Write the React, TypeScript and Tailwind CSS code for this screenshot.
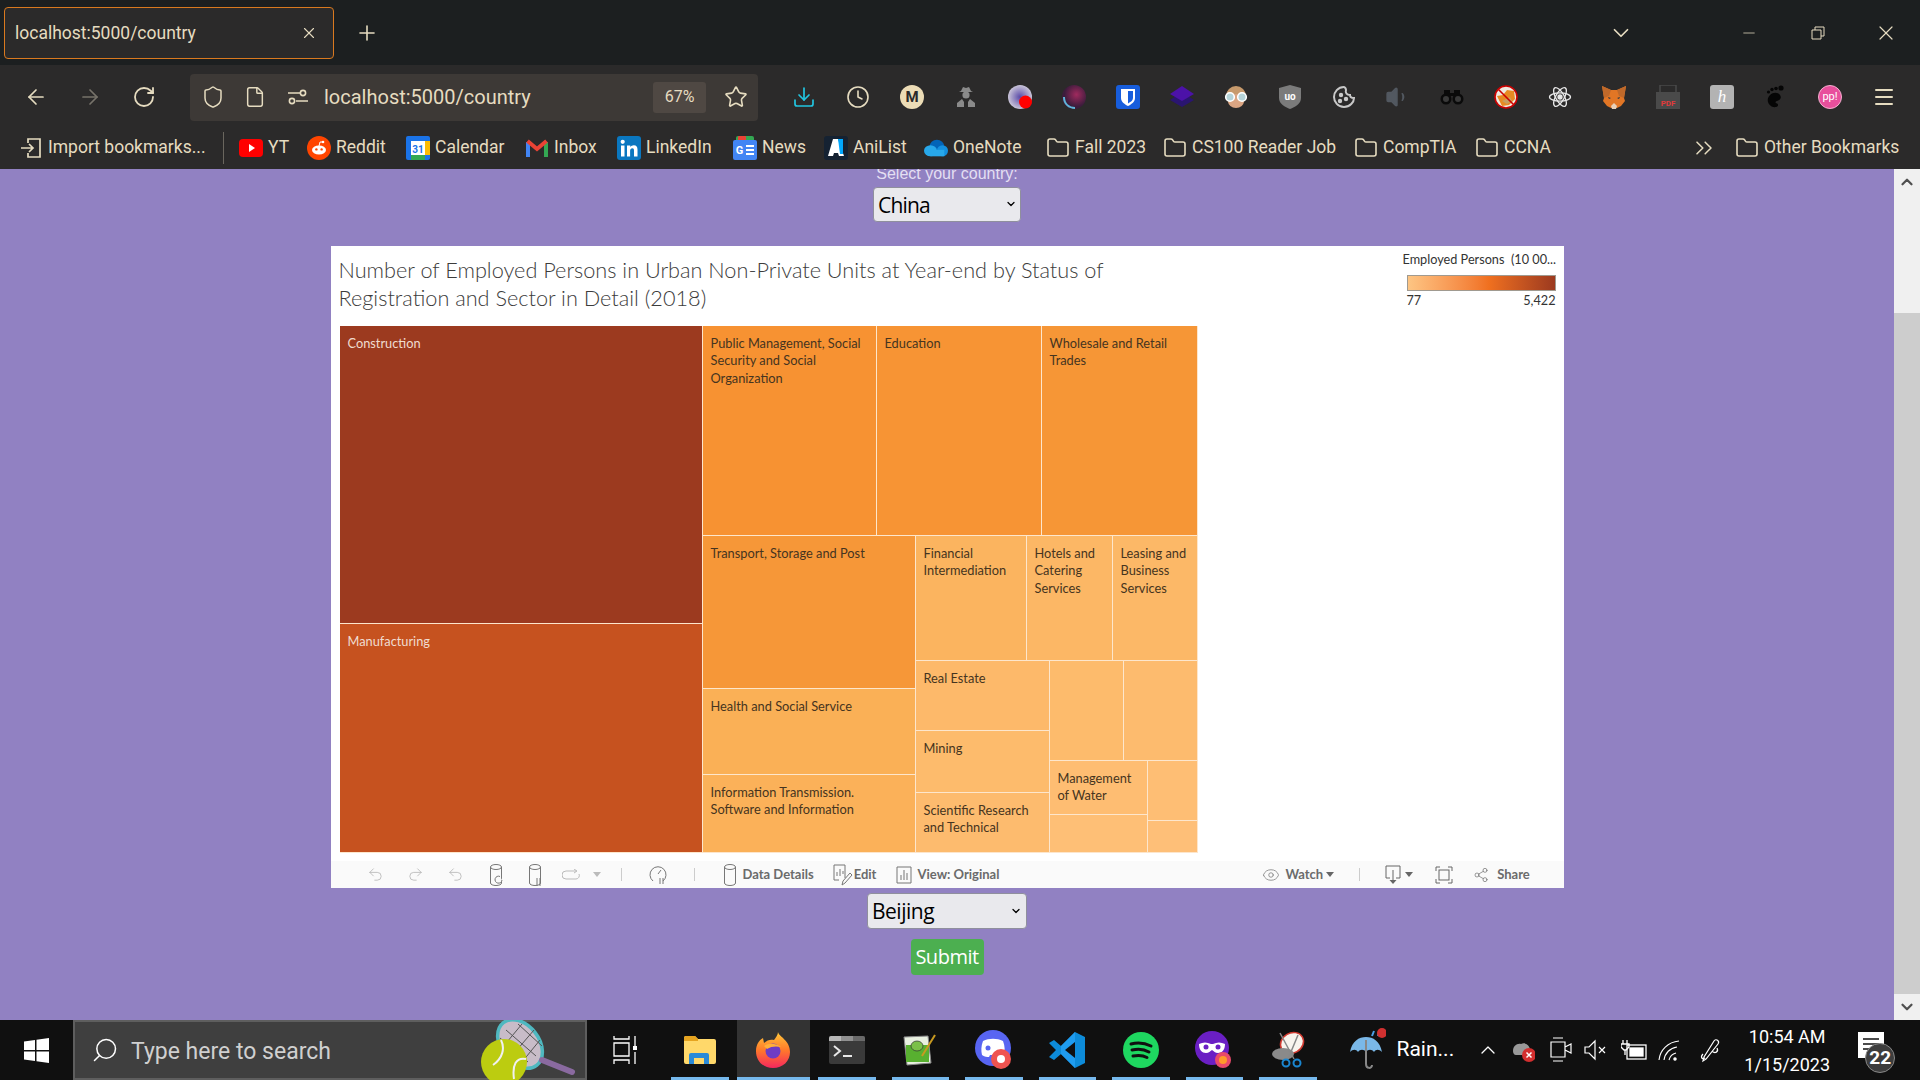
import React from 'react';
import {
  ArrowLeft,
  ArrowRight,
  RotateCw,
  Shield,
  File,
  Star,
  X,
  Plus,
  ChevronDown,
  ChevronUp,
  Minus,
  Folder,
  ChevronsRight,
  Menu,
  Clock,
  Download,
  Search,
  Eye,
  Share2,
  Undo2,
  Redo2,
  Volume1,
} from 'lucide-react';

const cream = 'text-[#e6dcc0]';

const SlidersIcon = () => (
  <svg width="22" height="22" viewBox="0 0 22 22" fill="none" stroke="#e6dcc0" strokeWidth="1.6">
    <circle cx="5" cy="15" r="2.6" />
    <circle cx="16" cy="7" r="2.6" />
    <path d="M1 7h12M9 15h12" />
  </svg>
);

const ImportIcon = () => (
  <svg width="22" height="22" viewBox="0 0 22 22" fill="none" stroke="#e6dcc0" strokeWidth="1.7">
    <path d="M8 6V2h12v18H8v-4M1 11h12M9 7l4 4-4 4" />
  </svg>
);

const YtIcon = () => (
  <svg width="24" height="18" viewBox="0 0 24 18">
    <rect width="24" height="18" rx="4" fill="#f00" />
    <path d="M10 5l6 4-6 4z" fill="#fff" />
  </svg>
);

const RedditIcon = () => (
  <svg width="24" height="24" viewBox="0 0 24 24">
    <circle cx="12" cy="12" r="12" fill="#ff4500" />
    <ellipse cx="12" cy="14" rx="7" ry="4.6" fill="#fff" />
    <circle cx="9.4" cy="13.4" r="1.2" fill="#ff4500" />
    <circle cx="14.6" cy="13.4" r="1.2" fill="#ff4500" />
    <circle cx="16" cy="6" r="1.3" fill="#fff" />
    <path d="M12 10l1-4 3 0" stroke="#fff" fill="none" />
  </svg>
);

const CalendarIcon = () => (
  <svg width="24" height="24" viewBox="0 0 24 24">
    <rect width="24" height="24" rx="2" fill="#1a73e8" />
    <rect x="5" y="5" width="14" height="14" fill="#fff" />
    <rect x="19" y="5" width="5" height="14" fill="#fbbc04" />
    <rect x="5" y="19" width="14" height="5" fill="#34a853" />
    <text x="12" y="16.5" textAnchor="middle" fontSize="10" fontWeight="700" fill="#1a73e8" fontFamily="Roboto, sans-serif">31</text>
  </svg>
);

const GmailIcon = () => (
  <svg width="22" height="18" viewBox="0 0 22 18" fill="none">
    <path d="M2 18V3" stroke="#4285f4" strokeWidth="4" />
    <path d="M20 18V3" stroke="#34a853" strokeWidth="4" />
    <path d="M1.5 2l9.5 8 9.5-8" stroke="#ea4335" strokeWidth="4" />
  </svg>
);

const LinkedInIcon = () => (
  <svg width="24" height="24" viewBox="0 0 24 24">
    <rect width="24" height="24" rx="3" fill="#0a77c0" />
    <rect x="4" y="9.5" width="3.5" height="11" fill="#fff" />
    <circle cx="5.7" cy="5.8" r="2.1" fill="#fff" />
    <path d="M10 9.5h3.3V11c.8-1.1 2-1.8 3.5-1.8 2.7 0 3.7 1.7 3.7 4.5v6.800h-3.500v-6c0-1.400-.5-2.200-1.700-2.200s-2.200 1-2.200 2.400v5.800H10z" fill="#fff" />
  </svg>
);

const NewsIcon = () => (
  <svg width="24" height="24" viewBox="0 0 24 24">
    <rect x="3" y="0" width="18" height="8" rx="2" fill="#34a853" />
    <rect x="5" y="0" width="8" height="6" rx="1" fill="#ea4335" />
    <rect y="4" width="24" height="20" rx="2" fill="#4285f4" />
    <text x="6.500" y="18" textAnchor="middle" fontSize="11" fontWeight="700" fill="#fff" fontFamily="Roboto, sans-serif">G</text>
    <path d="M13 10h8M13 14h8M13 18h8" stroke="#fff" strokeWidth="2" />
  </svg>
);

const AniListIcon = () => (
  <svg width="24" height="24" viewBox="0 0 24 24">
    <rect width="24" height="24" rx="3" fill="#152232" />
    <path d="M9 3h5l6 17h-5l-1-3h-4l-1 3H4z" fill="#fff" />
    <path d="M14 3h5v15h-3z" fill="#02a9ff" />
  </svg>
);

const OneNoteIcon = () => (
  <svg width="26" height="18" viewBox="0 0 26 18">
    <ellipse cx="14" cy="7.500" rx="8" ry="7.500" fill="#0364b8" />
    <ellipse cx="20" cy="12" rx="6" ry="6" fill="#1490df" />
    <ellipse cx="7" cy="12" rx="7" ry="6" fill="#28a8ea" />
    <rect x="7" y="11" width="15" height="7" fill="#28a8ea" />
  </svg>
);

const Bookmark = ({ w, icon, label }: { w: string; icon: React.ReactNode; label: string }) => (
  <div className={`${w} flex items-center gap-[5px] shrink-0`}>
    <div className="w-6 flex justify-center shrink-0">{icon}</div>
    <span className="whitespace-nowrap text-[17.500px]">{label}</span>
  </div>
);

const FolderIcon = () => <Folder size={24} strokeWidth={1.6} className={cream} />;

const MIcon = () => (
  <div className="w-6 h-6 rounded-full bg-[#ecdcb6] flex items-center justify-center text-[15px] font-bold text-[#2a2a2a]">M</div>
);

const SpyIcon = () => (
  <svg width="20" height="24" viewBox="0 0 20 24" fill="#8a8a8a">
    <path d="M5 6l2-4 3 1 3-1 2 4 2 1H3z" />
    <circle cx="10" cy="10" r="3.600" />
    <path d="M1 22v-4l5-4 2 3v5zM19 22v-4l-5-4-2 3v5z" />
  </svg>
);

const Ext1 = () => (
  <svg width="24" height="24" viewBox="0 0 24 24">
    <defs>
      <radialGradient id="ext1">
        <stop offset="0" stopColor="#5a4aa8" />
        <stop offset="1" stopColor="#c9c4d8" />
      </radialGradient>
    </defs>
    <circle cx="12" cy="12" r="12" fill="url(#ext1)" />
    <circle cx="17.500" cy="17" r="6.500" fill="#f00" />
  </svg>
);

const Ext2 = () => (
  <svg width="24" height="24" viewBox="0 0 24 24">
    <defs>
      <radialGradient id="ext2" cx="0.600" cy="0.400">
        <stop offset="0" stopColor="#a02a5e" />
        <stop offset="1" stopColor="#3c1c3c" />
      </radialGradient>
    </defs>
    <circle cx="12" cy="12" r="12" fill="url(#ext2)" />
    <path d="M2 12c0 7 5 11 11 11" stroke="#5fb4d8" strokeWidth="2" fill="none" />
  </svg>
);

const BitwardenIcon = () => (
  <svg width="24" height="24" viewBox="0 0 24 24">
    <rect width="24" height="24" rx="3" fill="#175ddc" />
    <path d="M5 4h14v9c0 4-4 6.500-7 8-3-1.500-7-4-7-8z" fill="#fff" />
    <path d="M12 6h5v7c0 2.500-2.500 4-5 5.500z" fill="#175ddc" />
  </svg>
);

const DiamondIcon = () => (
  <svg width="24" height="24" viewBox="0 0 24 24">
    <path d="M12 7L24 15 12 22 0 15z" fill="#2a1570" />
    <path d="M12 1L24 9 12 16 0 9z" fill="#4c12a8" />
  </svg>
);

const FaceIcon = () => (
  <svg width="24" height="24" viewBox="0 0 24 24">
    <circle cx="12" cy="11" r="10" fill="#c79a6c" />
    <ellipse cx="12" cy="16" rx="8" ry="7" fill="#dba583" />
    <circle cx="6" cy="12" r="4.300" fill="#b5d3d8" stroke="#fff" strokeWidth="1.600" />
    <circle cx="18" cy="12" r="4.300" fill="#b5d3d8" stroke="#fff" strokeWidth="1.600" />
  </svg>
);

const UblockIcon = () => (
  <svg width="22" height="24" viewBox="0 0 22 24">
    <path d="M11 0l11 3v10c0 6-6 9-11 11C6 22 0 19 0 13V3z" fill="#7b7b7b" />
    <text x="11" y="15" textAnchor="middle" fontSize="10" fontWeight="700" fill="#fff" fontFamily="Roboto, sans-serif">uo</text>
  </svg>
);

const CookieIcon = () => (
  <svg width="24" height="24" viewBox="0 0 24 24" fill="none" stroke="#c8c8c8" strokeWidth="2">
    <path d="M12 2c-6 0-10 5-10 10s4 10 10 10 10-5 10-9c-3 0-4-1-4-3-3 0-5-2-4-5 0-1-1-3-2-3z" />
    <circle cx="9" cy="10" r="1.200" fill="#c8c8c8" />
    <circle cx="14" cy="14" r="1.200" fill="#c8c8c8" />
    <circle cx="8" cy="16" r="1.200" fill="#c8c8c8" />
  </svg>
);

const BinocularsIcon = () => (
  <svg width="24" height="16" viewBox="0 0 24 16">
    <circle cx="6" cy="10" r="5.500" fill="#0a0a0a" />
    <circle cx="18" cy="10" r="5.500" fill="#0a0a0a" />
    <circle cx="6" cy="10" r="3" fill="#3a3a3a" />
    <circle cx="18" cy="10" r="3" fill="#3a3a3a" />
    <rect x="4" y="1" width="6" height="6" fill="#0a0a0a" />
    <rect x="14" y="1" width="6" height="6" fill="#0a0a0a" />
    <rect x="10" y="4" width="4" height="3" fill="#0a0a0a" />
  </svg>
);

const NoFoxIcon = () => (
  <svg width="24" height="24" viewBox="0 0 24 24">
    <circle cx="12" cy="12" r="11" fill="#efe9e0" />
    <path d="M3 11l6-1 4-5 7 1 1 8-6 6-7 1z" fill="#e88a22" />
    <path d="M8 16l8-4 2 4-5 3z" fill="#c8a060" />
    <circle cx="12" cy="12" r="11" fill="none" stroke="#c00" strokeWidth="1.600" />
    <path d="M4.500 4.500l15 15" stroke="#c00" strokeWidth="1.600" />
  </svg>
);

const AtomIcon = () => (
  <svg width="24" height="24" viewBox="-12 -12 24 24" fill="none" stroke="#e8e8e8" strokeWidth="1.300">
    <ellipse rx="10.500" ry="4.200" />
    <ellipse rx="10.500" ry="4.200" transform="rotate(60)" />
    <ellipse rx="10.500" ry="4.200" transform="rotate(120)" />
    <circle r="2" fill="#e8e8e8" />
  </svg>
);

const FoxIcon = () => (
  <svg width="24" height="24" viewBox="0 0 24 24">
    <path d="M0 1l9 4h6l9-4-2 12 1 3-4 5-4 2H9l-4-2-4-5 1-3z" fill="#e27625" />
    <path d="M0 1l9 4-2 6-5 2zM24 1l-9 4 2 6 5 2z" fill="#c0692a" />
    <path d="M9 21l3-3 3 3-1 3h-4z" fill="#e8d0b8" />
    <path d="M6 12l3 1-2 1zM18 12l-3 1 2 1z" fill="#233447" />
  </svg>
);

const PdfIcon = () => (
  <svg width="24" height="24" viewBox="0 0 24 24">
    <rect x="4" y="0" width="16" height="9" fill="none" stroke="#4a4a4a" strokeWidth="1.500" />
    <rect y="7" width="24" height="17" fill="#4a4a4a" />
    <text x="12" y="21" textAnchor="middle" fontSize="8" fontWeight="700" fill="#e23a3a" fontFamily="Roboto, sans-serif">PDF</text>
  </svg>
);

const FootIcon = () => (
  <svg width="20" height="24" viewBox="0 0 20 24" fill="#050505">
    <path d="M4 10c3-3 8-3 10 0 2 3 0 5-3 6-2 .6-2 2 0 2.500 1.500.4 1.500 3-1 3.500-4 .8-7-2-8-5-.7-2.500 0-5 2-7z" />
    <circle cx="2.500" cy="7" r="1.600" />
    <circle cx="6" cy="4.500" r="1.700" />
    <circle cx="10" cy="3.500" r="1.800" />
    <circle cx="15" cy="3" r="2.600" />
  </svg>
);

const extensions: React.ReactNode[] = [
  <Download key="dl" size={24} strokeWidth={1.7} className="text-[#22c5e0]" />,
  <Clock key="clock" size={24} strokeWidth={1.6} className={cream} />,
  <MIcon key="m" />,
  <SpyIcon key="spy" />,
  <Ext1 key="e1" />,
  <Ext2 key="e2" />,
  <BitwardenIcon key="bw" />,
  <DiamondIcon key="dia" />,
  <FaceIcon key="face" />,
  <UblockIcon key="ub" />,
  <CookieIcon key="cookie" />,
  <Volume1 key="vol" size={26} fill="#525860" strokeWidth={1.500} className="text-[#525860]" />,
  <BinocularsIcon key="bin" />,
  <NoFoxIcon key="nofox" />,
  <AtomIcon key="atom" />,
  <FoxIcon key="fox" />,
  <PdfIcon key="pdf" />,
  <div key="h" className="w-6 h-6 rounded-[3px] bg-[#b3b3b3] flex items-center justify-center text-[17px] italic text-white font-['Liberation_Serif',serif]">h</div>,
  <FootIcon key="foot" />,
  <div key="pp" className="w-6 h-6 rounded-full bg-[#e84f9c] border border-[#f5b0d0] flex items-center justify-center text-[11px] text-white">pp!</div>,
  <Menu key="menu" size={24} strokeWidth={2} className={cream} />,
];

const Cell = ({ className, label, light }: { className: string; label?: string; light?: boolean }) => (
  <div className={`${className} shrink-0 border-r-[1.500px] border-b-[1.500px] border-[#fde6cc] pl-[8px] pr-[2px] pt-[8.500px] text-[12.800px] leading-[17.500px] whitespace-pre-line ${light ? 'text-[#f0dcd0]' : 'text-[#453420]'}`}>
    {label}
  </div>
);

const Treemap = () => (
  <div className="ml-[9px] flex w-[858px] h-[527px] font-['Lato',sans-serif]">
    <div className="w-[363px] flex flex-col">
      <Cell className="h-[298px] bg-[#9c3a1f]" label="Construction" light />
      <Cell className="h-[229px] bg-[#c6521f]" label="Manufacturing" light />
    </div>
    <div className="w-[495px] flex flex-col">
      <div className="flex h-[210px]">
        <Cell className="w-[174px] bg-[#f79232]" label={'Public Management, Social\nSecurity and Social\nOrganization'} />
        <Cell className="w-[165px] bg-[#f79434]" label="Education" />
        <Cell className="w-[156px] bg-[#f69636]" label={'Wholesale and Retail\nTrades'} />
      </div>
      <div className="flex h-[317px]">
        <div className="w-[213px] flex flex-col">
          <Cell className="h-[153px] bg-[#f69738]" label="Transport, Storage and Post" />
          <Cell className="h-[86px] bg-[#fab056]" label="Health and Social Service" />
          <Cell className="h-[78px] bg-[#fbb159]" label={'Information Transmission.\nSoftware and Information'} />
        </div>
        <div className="w-[282px] flex flex-col">
          <div className="flex h-[125px]">
            <Cell className="w-[111px] bg-[#fbb45f]" label={'Financial\nIntermediation'} />
            <Cell className="w-[86px] bg-[#fcb765]" label={'Hotels and\nCatering\nServices'} />
            <Cell className="w-[85px] bg-[#fcb867]" label={'Leasing and\nBusiness\nServices'} />
          </div>
          <div className="flex h-[192px]">
            <div className="w-[134px] flex flex-col">
              <Cell className="h-[70px] bg-[#fdb96a]" label="Real Estate" />
              <Cell className="h-[62px] bg-[#fdbb6c]" label="Mining" />
              <Cell className="h-[60px] bg-[#fdbb6e]" label={'Scientific Research\nand Technical'} />
            </div>
            <div className="w-[148px] flex flex-col">
              <div className="flex h-[100px]">
                <Cell className="w-[74px] bg-[#fdbb6c]" />
                <Cell className="w-[74px] bg-[#fdbb6e]" />
              </div>
              <div className="flex h-[92px]">
                <div className="w-[98px] flex flex-col">
                  <Cell className="h-[54px] bg-[#febd72]" label={'Management\nof Water'} />
                  <Cell className="h-[38px] bg-[#febf76]" />
                </div>
                <div className="w-[50px] flex flex-col">
                  <Cell className="h-[60px] bg-[#febe74]" />
                  <Cell className="h-[32px] bg-[#febf78]" />
                </div>
              </div>
            </div>
          </div>
        </div>
      </div>
    </div>
  </div>
);

const Cylinder = ({ children }: { children?: React.ReactNode }) => (
  <svg width="14" height="24" viewBox="0 0 14 24" fill="none" stroke="#777" strokeWidth="1">
    <ellipse cx="7" cy="4" rx="5.500" ry="2.500" />
    <path d="M1.500 4v16c0 1.500 2.500 2.500 5.500 2.500s5.500-1 5.500-2.500V4" />
    {children}
  </svg>
);

const VizToolbar = () => (
  <div className="h-[27px] bg-[#fafafa] flex items-center text-[13px] font-bold text-[#6b6b6b] font-['Lato',sans-serif]">
    <Undo2 size={17} strokeWidth={1} className="ml-[36px] text-[#aaa]" />
    <Redo2 size={17} strokeWidth={1} className="ml-[23px] text-[#aaa]" />
    <Undo2 size={17} strokeWidth={1} className="ml-[23px] text-[#aaa]" />
    <div className="ml-[25px]">
      <Cylinder>
        <path d="M13 17a3.500 3.500 0 11-2-3.500" fill="#fafafa" />
      </Cylinder>
    </div>
    <div className="ml-[25px]">
      <Cylinder>
        <path d="M9 15v8M12 15v8" stroke="#777" />
      </Cylinder>
    </div>
    <svg width="20" height="12" viewBox="0 0 20 12" fill="none" stroke="#bbb" className="ml-[20px]">
      <path d="M14 2H4a3.500 3.500 0 000 8h10a3.500 3.500 0 003-5M12 0l3 2-3 2" />
    </svg>
    <span className="ml-[11px] w-0 h-0 border-x-[4px] border-x-transparent border-t-[5px] border-t-[#bbb]" />
    <span className="ml-[20px] w-px h-[13px] bg-[#ccc]" />
    <svg width="18" height="20" viewBox="0 0 18 20" fill="none" stroke="#777" className="ml-[27px]">
      <path d="M4 16a8 8 0 1110 0M9 9l3-4M11 13v6M14 13v6" />
    </svg>
    <span className="ml-[27px] w-px h-[13px] bg-[#ccc]" />
    <div className="ml-[28px] flex items-center"><Cylinder /></div>
    <span className="ml-[6px]">Data Details</span>
    <svg width="20" height="22" viewBox="0 0 20 22" fill="none" stroke="#777" className="ml-[19px]">
      <path d="M12 14V1H1v15h5M4 12V8M7 12V5M10 10V7M9 21l1-4 7-8 2 2-7 8z" />
    </svg>
    <span className="ml-[1px]">Edit</span>
    <svg width="16" height="18" viewBox="0 0 16 18" fill="none" stroke="#777" className="ml-[20px]">
      <path d="M1 1h14v16H1zM5 14V9M8 14V4M11 14V7" />
    </svg>
    <span className="ml-[5px]">View: Original</span>
    <Eye size={18} strokeWidth={1} className="ml-[263px] text-[#777]" />
    <span className="ml-[5px]">Watch</span>
    <span className="ml-[3px] w-0 h-0 border-x-[4px] border-x-transparent border-t-[5px] border-t-[#666]" />
    <span className="ml-[25px] w-px h-[13px] bg-[#ccc]" />
    <svg width="16" height="20" viewBox="0 0 16 20" fill="none" stroke="#666" className="ml-[25px]">
      <path d="M5 13H1V1h14v12h-4M8 5v11" />
      <path d="M4.500 15h7L8 19z" fill="#666" stroke="none" />
    </svg>
    <span className="ml-[4px] w-0 h-0 border-x-[4px] border-x-transparent border-t-[5px] border-t-[#666]" />
    <svg width="18" height="18" viewBox="0 0 18 18" fill="none" stroke="#666" className="ml-[22px]">
      <path d="M1 5V1h4M13 1h4v4M17 13v4h-4M5 17H1v-4" />
      <rect x="4" y="4" width="10" height="10" />
    </svg>
    <Share2 size={16} strokeWidth={1} className="ml-[20px] text-[#666]" />
    <span className="ml-[8px]">Share</span>
  </div>
);

const FirefoxIcon = () => (
  <svg width="34" height="36" viewBox="0 0 34 36">
    <defs>
      <linearGradient id="ffx" x1="0.500" y1="0" x2="0.500" y2="1">
        <stop offset="0" stopColor="#ffc83a" />
        <stop offset="0.500" stopColor="#ff7a2a" />
        <stop offset="1" stopColor="#f5275e" />
      </linearGradient>
    </defs>
    <path d="M22 0c1 5 12 8 12 20 0 9-7 16-17 16S0 29 0 19C0 13 3 8 7 6l1 5c3-3 7-4 10-3 2-3 4-5 4-8z" fill="url(#ffx)" />
    <circle cx="17" cy="19" r="7.500" fill="#6e3cc4" />
    <path d="M8 14c4-3 12-3 17 1-4-1-10-1-14 2z" fill="#ffb03a" />
  </svg>
);

const FolderApp = () => (
  <svg width="32" height="28" viewBox="0 0 32 28">
    <path d="M0 2a2 2 0 012-2h9l3 3h16a2 2 0 012 2v21a2 2 0 01-2 2H2a2 2 0 01-2-2z" fill="#ffd86a" />
    <path d="M0 2a2 2 0 012-2h9l3 3 0 2H0z" fill="#e6a420" />
    <path d="M5 28v-9a2 2 0 012-2h16a2 2 0 012 2v9h-5v-6H10v6z" fill="#2a8ad8" />
  </svg>
);

const TerminalIcon = () => (
  <svg width="36" height="28" viewBox="0 0 36 28">
    <rect width="36" height="28" rx="2" fill="#3a3a3a" />
    <path d="M0 2a2 2 0 012-2h10v5H0z" fill="#b8b8b8" />
    <rect x="12" width="12" height="5" fill="#909090" />
    <path d="M24 0h10a2 2 0 012 2v3H24z" fill="#6a6a6a" />
    <path d="M5 10l6 5-6 5" stroke="#e8e8e8" strokeWidth="2" fill="none" />
    <rect x="14" y="19" width="9" height="2" fill="#e8e8e8" />
  </svg>
);

const NotepadIcon = () => (
  <svg width="34" height="32" viewBox="0 0 34 32">
    <path d="M1 3l24-1 3 27-24 2z" fill="#e8f0e0" stroke="#888" />
    <rect x="3" y="11" width="23" height="17" fill="#58b030" />
    <ellipse cx="14" cy="12" rx="6" ry="5" fill="#7ac048" stroke="#333" strokeWidth="0.700" />
    <path d="M19 22L32 1" stroke="#c89a20" strokeWidth="2" />
  </svg>
);

const DiscordIcon = () => (
  <svg width="38" height="40" viewBox="0 0 38 40">
    <circle cx="18" cy="18" r="18" fill="#5865f2" />
    <path d="M8 11c6-3 14-3 20 0 2 5 2 10 1 14-3 2-5 2-7 2l-1-2H15l-1 2c-2 0-4 0-7-2-1-4-1-9 1-14z" fill="#fff" />
    <circle cx="13" cy="18" r="2.500" fill="#5865f2" />
    <circle cx="26" cy="29" r="10" fill="#ef5350" />
    <circle cx="26" cy="29" r="4" fill="#fff" />
  </svg>
);

const VsCodeIcon = () => (
  <svg width="36" height="36" viewBox="0 0 36 36">
    <path d="M26 0l10 5v26l-10 5L12 22l-7 6-5-3 7-7-7-7 5-3 7 6z" fill="#0d8bd9" />
    <path d="M26 0v36L12 22V14z" fill="#1f9cf0" />
    <path d="M26 10L16 18l10 8z" fill="#101010" />
  </svg>
);

const SpotifyIcon = () => (
  <svg width="36" height="36" viewBox="0 0 36 36" fill="none">
    <circle cx="18" cy="18" r="18" fill="#1ed760" />
    <path d="M8 12c7-2 14-1 20 2M9 18c6-1.500 12-1 17 2M10 24c5-1 10-.8 14 1.500" stroke="#101010" strokeWidth="3" strokeLinecap="round" />
  </svg>
);

const MaskIcon = () => (
  <svg width="38" height="38" viewBox="0 0 38 38">
    <circle cx="17" cy="17" r="17" fill="#6a1fc4" />
    <path d="M4 13c4-2 8-2 12 0h2c4-2 8-2 12 0 0 6-3 9-7 9-3 0-4-2-6-3-2 1-3 3-6 3-4 0-7-3-7-9z" fill="#fff" />
    <circle cx="11" cy="16" r="2.500" fill="#6a1fc4" />
    <circle cx="23" cy="16" r="2.500" fill="#6a1fc4" />
    <circle cx="28" cy="29" r="8" fill="#e84a6a" />
    <circle cx="28" cy="29" r="4" fill="#ff9a2a" />
  </svg>
);

const SnipIcon = () => (
  <svg width="36" height="38" viewBox="0 0 36 38" fill="none">
    <ellipse cx="22" cy="12" rx="12" ry="10" fill="#f8f4ee" stroke="#d03a30" strokeWidth="1.500" transform="rotate(-30 22 12)" />
    <ellipse cx="13" cy="23" rx="11" ry="6" fill="#8a8a8a" />
    <path d="M10 2l14 26M28 4L18 28" stroke="#888" strokeWidth="1.500" />
    <circle cx="16" cy="32" r="3.500" stroke="#1a86d0" strokeWidth="2" />
    <circle cx="27" cy="32" r="3.500" stroke="#1a86d0" strokeWidth="2" />
  </svg>
);

const UmbrellaIcon = () => (
  <svg width="36" height="44" viewBox="0 0 36 44" fill="none">
    <path d="M0 24C2 13 9 9 16 9s14 4 16 15c-3-3-6-3-8 0-2-3-6-3-8 0-2-3-6-3-8 0-2-3-5-3-8 0z" fill="#7ab8e8" />
    <path d="M16 12v24c0 5 6 5 6 1" stroke="#888" strokeWidth="2" />
    <path d="M22 8l2-5M28 8l1-4" stroke="#4aa0e8" strokeWidth="2" />
    <circle cx="32" cy="5" r="5" fill="#d03030" />
  </svg>
);

const TennisArt = () => (
  <svg width="106" height="60" viewBox="0 0 106 60" fill="none" className="absolute left-[480px] top-0">
    <ellipse cx="40" cy="24" rx="19" ry="27" transform="rotate(-38 40 24)" fill="#c8bcc8" stroke="#4fb8c0" strokeWidth="3.500" />
    <path d="M26 10l30 26M20 18l28 24M38 4l24 22M30 38l24-28M22 28l20-24M42 42l18-22" stroke="#555" strokeWidth="1" />
    <path d="M62 40l30 12" stroke="#8a6aa0" strokeWidth="6" strokeLinecap="round" />
    <circle cx="24" cy="42" r="23" fill="#bccc10" />
    <path d="M21 20c4 8 2 18-8 25M46 39c-10-2-14 6-12 20" stroke="#f0f0f0" strokeWidth="2" />
  </svg>
);

const apps: { icon: React.ReactNode; active?: boolean }[] = [
  { icon: <FolderApp /> },
  { icon: <FirefoxIcon />, active: true },
  { icon: <TerminalIcon /> },
  { icon: <NotepadIcon /> },
  { icon: <DiscordIcon /> },
  { icon: <VsCodeIcon /> },
  { icon: <SpotifyIcon /> },
  { icon: <MaskIcon /> },
  { icon: <SnipIcon /> },
];

const Taskbar = () => (
  <div className="relative h-[60px] bg-[#101010] flex items-center text-white shrink-0">
    <div className="w-[73px] flex justify-center">
      <svg width="25" height="25" viewBox="0 0 25 25" fill="#fff">
        <path d="M0 3.500l11-1.600V12H0zM12.500 1.700L25 0v12H12.500zM0 13.500h11v9.600L0 21.500zM12.500 13.500H25V25l-12.500-1.800z" />
      </svg>
    </div>
    <div className="w-[514px] h-[60px] bg-[#3f3f3f] border-2 border-[#5e5e5e] flex items-center text-[#d0d0d0] text-[23px]">
      <Search size={28} strokeWidth={1.300} className="ml-[16px] -scale-x-100 text-white" />
      <span className="ml-[12px] mt-[5px]">Type here to search</span>
    </div>
    <TennisArt />
    <div className="w-[76px] flex justify-center shrink-0">
      <svg width="24" height="30" viewBox="0 0 24 30" fill="none" stroke="#fff" strokeWidth="1.300">
        <path d="M1 1v3h15V1M1 8h15v13H1zM1 29v-4h15v4M22 1v10M22 17v12" />
        <rect x="20" y="11" width="4" height="4" fill="#fff" stroke="none" />
      </svg>
    </div>
    {apps.map((a, i) => (
      <div key={i} className={`w-[73.500px] h-[60px] relative flex items-center justify-center shrink-0 ${a.active ? 'bg-[#333333]' : ''}`}>
        {a.icon}
        <span className={`absolute bottom-0 h-[3px] bg-[#76b9ed] ${a.active ? 'left-0 right-0' : 'left-[8px] right-[8px]'}`} />
      </div>
    ))}
    <div className="ml-[25px]"><UmbrellaIcon /></div>
    <span className="ml-[11px] text-[21px]">Rain...</span>
    <ChevronUp size={24} strokeWidth={1.300} className="ml-[22px]" />
    <svg width="24" height="24" viewBox="0 0 24 24" className="ml-[11px]">
      <path d="M2 13c0-5 4-8 8-7 4-2 9 1 9 6v5H5c-2 0-3-2-3-4z" fill="#999" />
      <circle cx="18" cy="17" r="7" fill="#d32f2f" />
      <path d="M15.500 14.500l5 5M20.500 14.500l-5 5" stroke="#fff" strokeWidth="1.500" />
    </svg>
    <svg width="24" height="28" viewBox="0 0 24 28" fill="none" stroke="#fff" strokeWidth="1.200" className="ml-[14px]">
      <path d="M2 6h14v15H2zM16 11l6-3v9l-6-3M4 2h10M4 25h10" />
    </svg>
    <svg width="24" height="24" viewBox="0 0 24 24" fill="none" stroke="#fff" strokeWidth="1.200" className="ml-[11px]">
      <path d="M1 9h4l6-6v18l-6-6H1zM15 9l6 6M21 9l-6 6" />
    </svg>
    <svg width="26" height="24" viewBox="0 0 26 24" fill="none" stroke="#fff" strokeWidth="1.300" className="ml-[13px]">
      <rect x="6" y="7" width="19" height="14" />
      <rect x="9" y="10" width="13" height="8" fill="#fff" />
      <path d="M2 2v4M6 2v4M0 6h8v3l-3 3H3L0 9zM4 12v5" />
    </svg>
    <svg width="24" height="24" viewBox="0 0 24 24" fill="none" stroke="#fff" strokeWidth="1.100" className="ml-[11px]">
      <path d="M1 22C2 12 10 4 21 3M6 22c1-7 6-12 13-13M11 22c1-4 3-6 7-7" />
      <circle cx="17" cy="21" r="1.200" fill="#fff" />
    </svg>
    <svg width="22" height="26" viewBox="0 0 22 26" fill="none" stroke="#fff" strokeWidth="1.200" className="ml-[18px]">
      <path d="M6 22l-3 2 1-4L14 4c2-3 6 0 4 3zM3 17c-3 3-1 6 2 4M12 14c3 3 7 1 5-3" />
    </svg>
    <div className="ml-[23px] mt-[2px] flex flex-col items-center text-[18px] leading-[28px] w-[84px]">
      <span>10:54 AM</span>
      <span>1/15/2023</span>
    </div>
    <div className="relative ml-[29px] w-[36px] h-[44px]">
      <svg width="26" height="26" viewBox="0 0 26 26" className="absolute left-0 top-[4px]">
        <path d="M0 0h26v26H0z" fill="#fff" />
        <path d="M5 7h16M5 12h16M5 17h16" stroke="#101010" strokeWidth="1.500" />
      </svg>
      <span className="absolute left-[7px] top-[15px] w-[30px] h-[30px] rounded-full bg-[#3d3d3d] border border-[#888] flex items-center justify-center text-[19px] font-bold">22</span>
    </div>
  </div>
);

const App: React.FC = () => {
  return (
    <div className={`w-[1920px] h-[1080px] overflow-hidden flex flex-col font-['Roboto',sans-serif] ${cream}`}>
      {/* tab strip */}
      <div className="h-[65px] bg-[#1c1f20] flex items-center shrink-0 relative">
        <div className="ml-[4px] mt-[1px] w-[330px] h-[52px] rounded-[4px] border border-[#d9791f] bg-[#2b2a2a] flex items-center justify-between pl-[10px] pr-[15px]">
          <span className="text-[17.500px]">localhost:5000/country</span>
          <X size={18} strokeWidth={1.500} />
        </div>
        <Plus size={24} strokeWidth={1.600} className="ml-[21px] mt-[1px]" />
        <div className="ml-auto flex items-center">
          <ChevronDown size={26} strokeWidth={1.600} className="mr-[106px]" />
          <Minus size={18} strokeWidth={1} className="mr-[53px]" />
          <svg width="14" height="14" viewBox="0 0 14 14" fill="none" stroke="#e6dcc0" className="mr-[49px]">
            <path d="M1 4h9v9H1zM4 4V1h9v9h-3" />
          </svg>
          <X size={24} strokeWidth={1.200} className="mr-[22px]" />
        </div>
      </div>

      {/* nav bar */}
      <div className="h-[64px] bg-[#2b2a2a] flex items-center shrink-0 pl-[9px]">
        <div className="w-[54px] flex justify-center"><ArrowLeft size={24} strokeWidth={1.700} /></div>
        <div className="w-[54px] flex justify-center"><ArrowRight size={24} strokeWidth={1.700} className="text-[#77736a]" /></div>
        <div className="w-[54px] flex justify-center"><RotateCw size={24} strokeWidth={1.800} /></div>
        <div className="ml-[19px] w-[568px] h-[47px] rounded-[4px] bg-[#3d3936] flex items-center pl-[11px] pr-[10px]">
          <Shield size={24} strokeWidth={1.500} />
          <File size={22} strokeWidth={1.600} className="ml-[19px]" />
          <div className="ml-[21px]"><SlidersIcon /></div>
          <span className="ml-[15px] text-[20px]">localhost:5000/country</span>
          <div className="ml-auto w-[53px] h-[31px] rounded-[3px] bg-[#4f4843] flex items-center justify-center text-[16px]">67%</div>
          <Star size={24} strokeWidth={1.600} className="ml-[18px]" />
        </div>
        <div className="ml-[19px] flex items-center">
          {extensions.map((icon, i) => (
            <div key={i} className="w-[54px] flex justify-center items-center">{icon}</div>
          ))}
        </div>
      </div>

      {/* bookmarks bar */}
      <div className="h-[40px] bg-[#2b2a2a] flex items-center shrink-0 pl-[19px] pb-[3px]">
        <Bookmark w="w-[204px]" icon={<ImportIcon />} label="Import bookmarks..." />
        <span className="w-px h-[32px] bg-[#6a665e] mr-[15px]" />
        <Bookmark w="w-[68px]" icon={<YtIcon />} label="YT" />
        <Bookmark w="w-[99px]" icon={<RedditIcon />} label="Reddit" />
        <Bookmark w="w-[119px]" icon={<CalendarIcon />} label="Calendar" />
        <Bookmark w="w-[92px]" icon={<GmailIcon />} label="Inbox" />
        <Bookmark w="w-[116px]" icon={<LinkedInIcon />} label="LinkedIn" />
        <Bookmark w="w-[91px]" icon={<NewsIcon />} label="News" />
        <Bookmark w="w-[100px]" icon={<AniListIcon />} label="AniList" />
        <Bookmark w="w-[122px]" icon={<OneNoteIcon />} label="OneNote" />
        <Bookmark w="w-[117px]" icon={<FolderIcon />} label="Fall 2023" />
        <Bookmark w="w-[191px]" icon={<FolderIcon />} label="CS100 Reader Job" />
        <Bookmark w="w-[121px]" icon={<FolderIcon />} label="CompTIA" />
        <Bookmark w="w-[218px]" icon={<FolderIcon />} label="CCNA" />
        <div className="w-[42px] shrink-0"><ChevronsRight size={28} strokeWidth={1.300} className="-ml-[3px]" /></div>
        <Bookmark w="w-[170px]" icon={<FolderIcon />} label="Other Bookmarks" />
      </div>

      {/* page */}
      <div className="flex-1 min-h-0 flex">
        <main className="flex-1 bg-[#9181c2] overflow-hidden flex flex-col items-center font-['Liberation_Sans',sans-serif]">
          <label className="-mt-[4px] h-[18px] mb-[4px] text-[16px] leading-[18px] text-[#e4dff2]">Select your country:</label>
          <div className="relative w-[148px] h-[35px] shrink-0">
            <select className="w-full h-full appearance-none rounded-[4px] border border-[#8f8f9d] bg-[#e9e9ed] pl-[4px] pt-[2px] text-[21px] text-black font-['Open_Sans',sans-serif] tracking-[-0.800px]">
              <option>China</option>
            </select>
            <ChevronDown size={12} strokeWidth={2.500} className="absolute right-[4px] top-[11px] text-black" />
          </div>

          <section className="mt-[24px] w-[1233px] h-[642px] shrink-0 bg-white flex flex-col">
            <div className="h-[80px] flex justify-between shrink-0">
              <h1 className="ml-[8px] mt-[10px] w-[790px] text-[21.700px] leading-[28px] font-light text-[#3c3c3c] font-['Lato',sans-serif]">
                Number of Employed Persons in Urban Non-Private Units at Year-end by Status of Registration and Sector in Detail (2018)
              </h1>
              <div className="w-[160px] mr-px text-[12.700px] text-[#333] font-['Lato',sans-serif]">
                <div className="mt-[4px] whitespace-nowrap">Employed Persons&nbsp;&nbsp;(10 00...</div>
                <div className="ml-[4px] mt-[6px] h-[16px] w-[149px] border border-[#a09a90] bg-gradient-to-r from-[#fdc583] via-[#f0701f] via-55% to-[#9c3a1f]" />
                <div className="ml-[4px] w-[149px] flex justify-between">
                  <span>77</span>
                  <span>5,422</span>
                </div>
              </div>
            </div>
            <Treemap />
            <div className="h-[8px] shrink-0" />
            <VizToolbar />
          </section>

          <div className="relative mt-[5px] w-[160px] h-[36px] shrink-0">
            <select className="w-full h-full appearance-none rounded-[4px] border border-[#8f8f9d] bg-[#e9e9ed] pl-[4px] pt-[1px] text-[21px] text-black font-['Open_Sans',sans-serif] tracking-[-0.500px]">
              <option>Beijing</option>
            </select>
            <ChevronDown size={12} strokeWidth={2.500} className="absolute right-[5px] top-[12px] text-black" />
          </div>
          <button className="mt-[10px] w-[73px] h-[36px] rounded-[4px] bg-[#4caf50] text-white text-[20px] font-['Open_Sans',sans-serif] tracking-[-0.500px]">Submit</button>
        </main>
        {/* scrollbar */}
        <div className="w-[26px] bg-[#f0f0f0] flex flex-col">
          <div className="h-[26px] flex items-center justify-center"><ChevronUp size={18} strokeWidth={3} className="text-[#505050]" /></div>
          <div className="mt-[118px] flex-1 bg-[#cdcdcd]" />
          <div className="h-[26px] flex items-center justify-center"><ChevronDown size={18} strokeWidth={3} className="text-[#505050]" /></div>
        </div>
      </div>

      <Taskbar />
    </div>
  );
};

export default App;
